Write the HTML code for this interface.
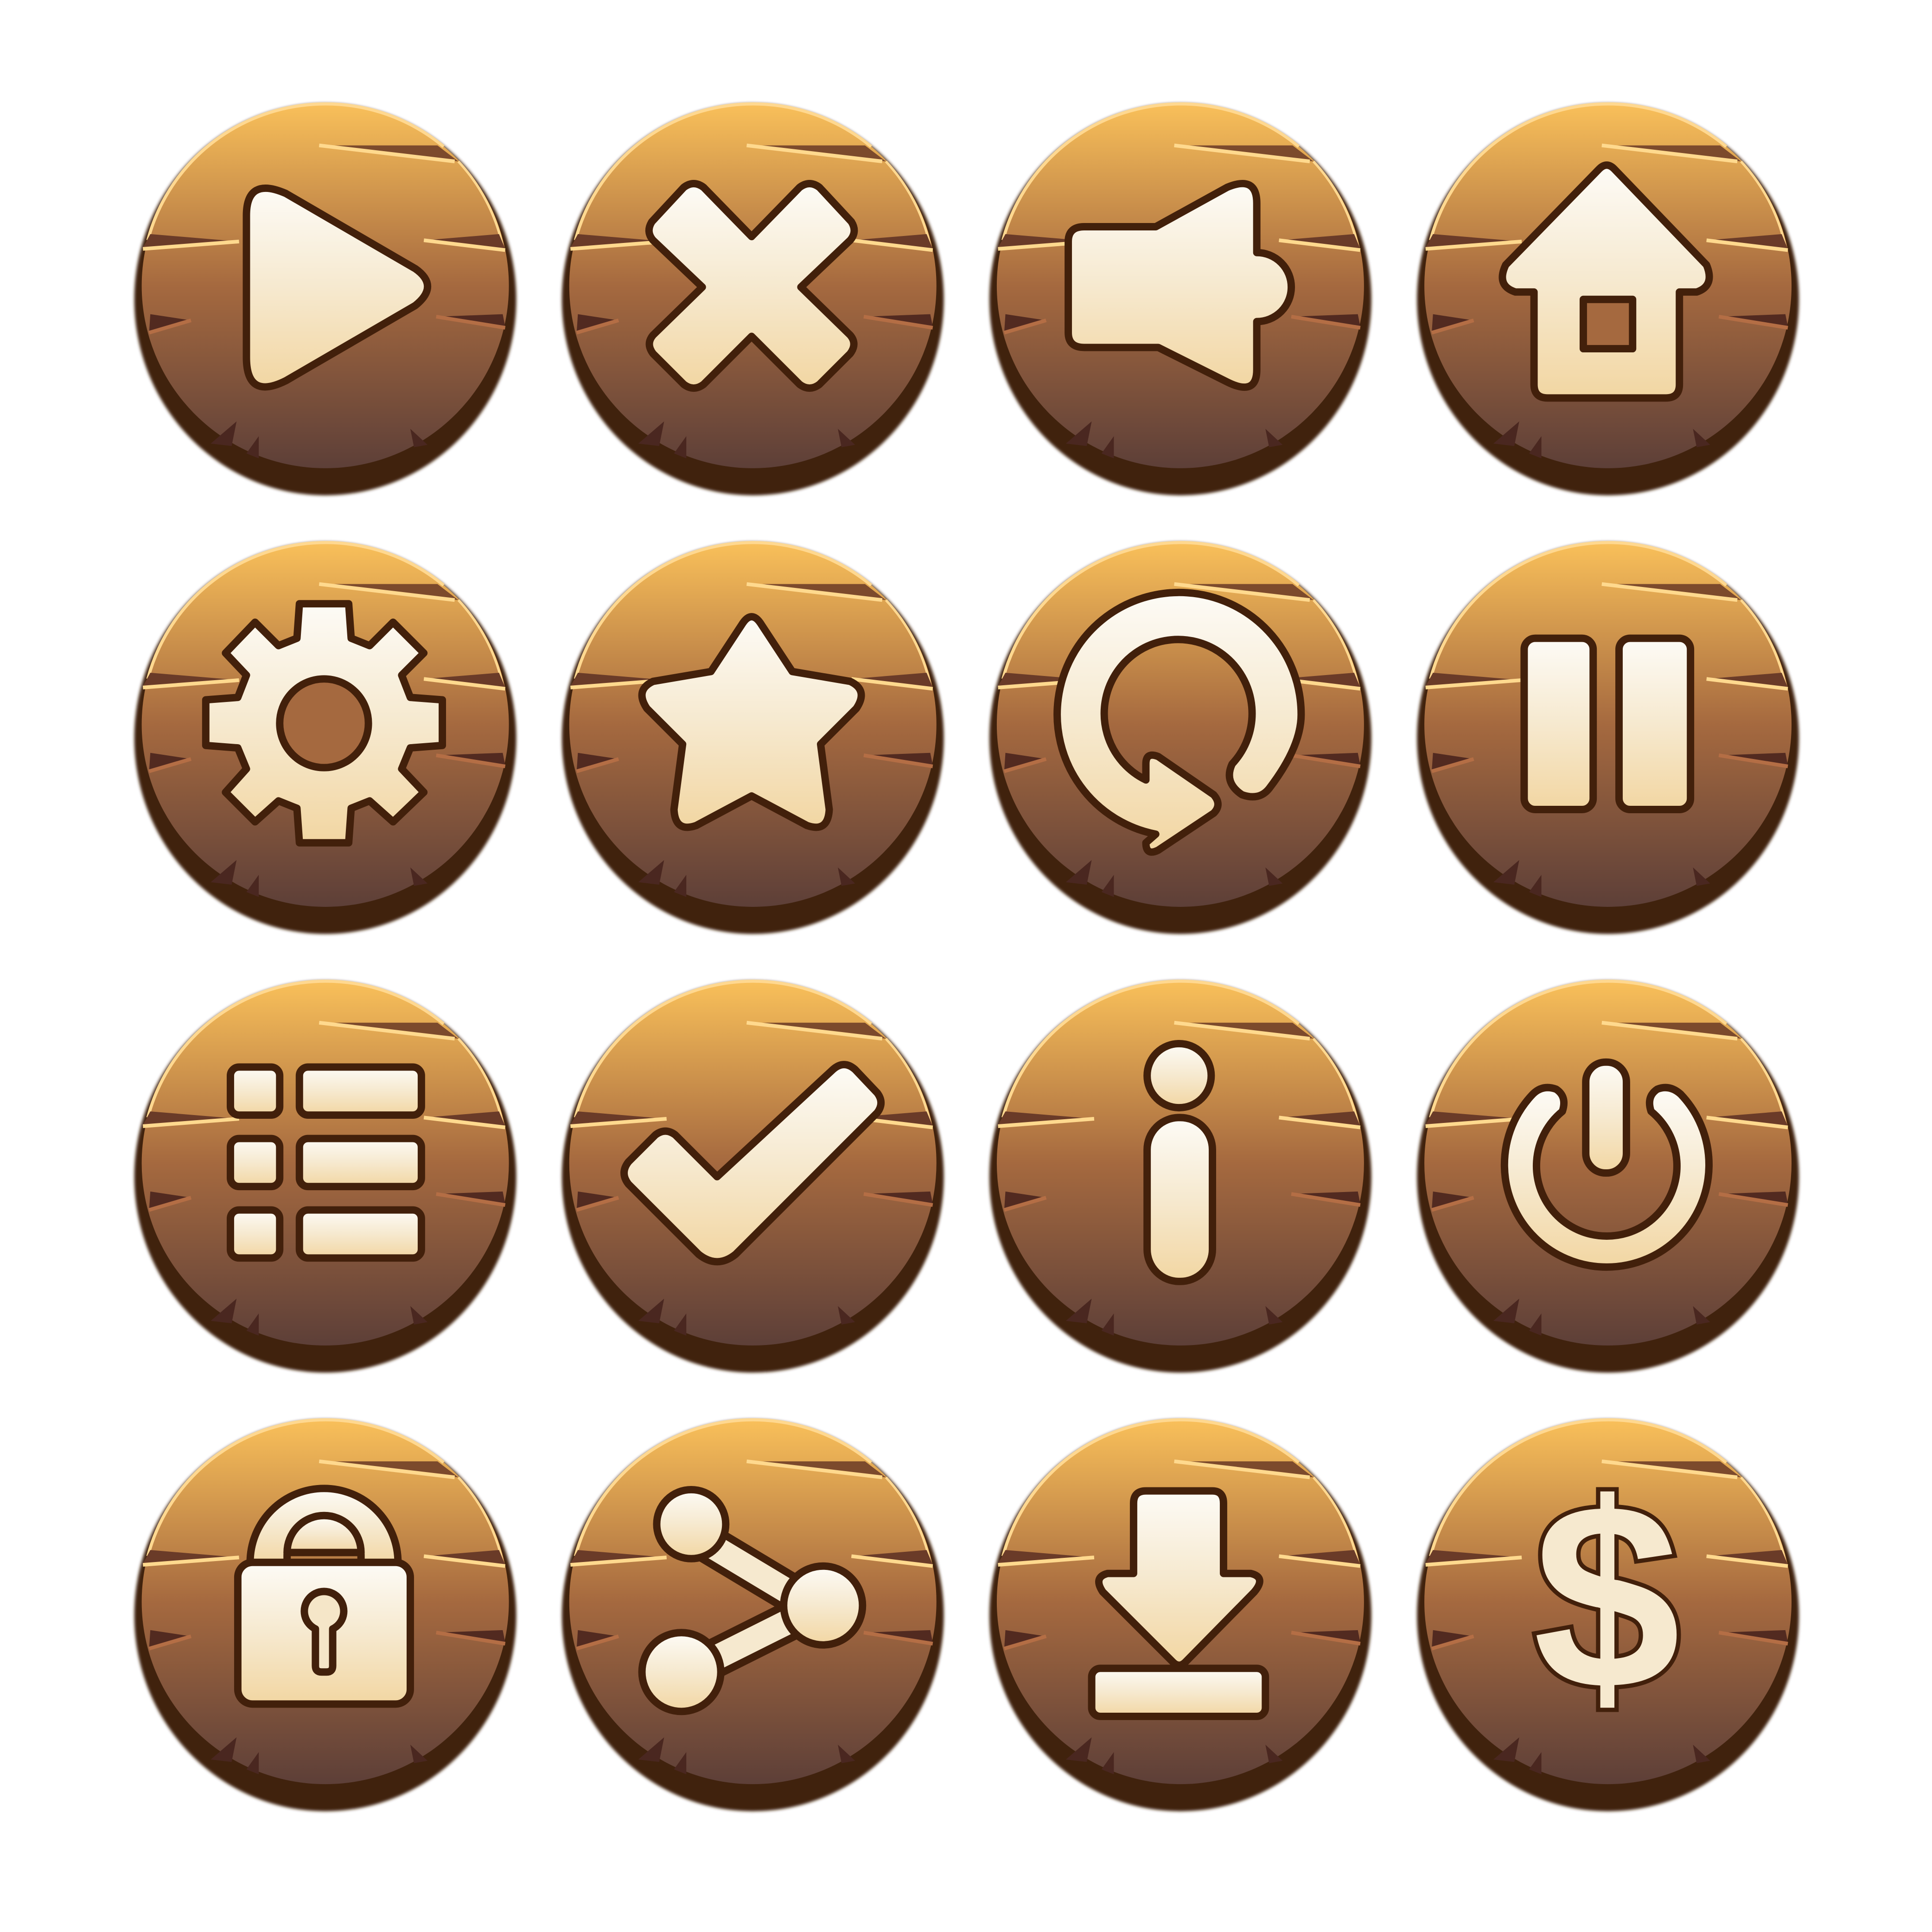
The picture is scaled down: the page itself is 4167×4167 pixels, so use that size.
<!DOCTYPE html>
<html><head><meta charset="utf-8"><style>
html,body{margin:0;padding:0;background:#fff;}
svg{display:block;width:4167px;height:4167px;}
</style></head><body>
<svg viewBox="0 0 1568 1568" xmlns="http://www.w3.org/2000/svg" xmlns:xlink="http://www.w3.org/1999/xlink">
<defs>
<filter id="bl" x="-10%" y="-10%" width="120%" height="120%"><feGaussianBlur stdDeviation="1.2"/></filter>
<linearGradient id="wood" x1="0" y1="0" x2="0" y2="1">
<stop offset="0" stop-color="#f9c05a"/><stop offset="0.5" stop-color="#a5693f"/><stop offset="1" stop-color="#5d3f38"/></linearGradient>
<linearGradient id="ic" x1="0" y1="0" x2="0" y2="1" gradientUnits="objectBoundingBox">
<stop offset="0" stop-color="#fdfbf6"/><stop offset="0.5" stop-color="#f6e9cf"/><stop offset="1" stop-color="#f2d6a2"/></linearGradient>
<g id="btn">
<ellipse cx="264" cy="243" rx="155" ry="159" fill="#3f200c" filter="url(#bl)"/>
<ellipse cx="264" cy="232" rx="149" ry="148" fill="url(#wood)"/>
<path d="M120 195 A149 148 0 0 1 360 119" fill="none" stroke="#ffd890" stroke-width="2.5"/>
<path d="M372 131 A149 148 0 0 1 408 200" fill="none" stroke="#ffd890" stroke-width="2"/>
<polygon points="259,118 355,118 372,131" fill="#7c4a2c"/>
<line x1="259" y1="118" x2="369" y2="131" stroke="#ffd98e" stroke-width="3"/>
<polygon points="122,190 194,196 116,201" fill="#6a3b28"/>
<line x1="116" y1="202" x2="194" y2="196" stroke="#ffd98e" stroke-width="3"/>
<polygon points="344,195 405,190 410,202" fill="#6a3b28"/>
<line x1="344" y1="195" x2="410" y2="203" stroke="#ffd98e" stroke-width="3"/>
<polygon points="122,255 155,260 121,270" fill="#522a20"/>
<line x1="121" y1="270" x2="155" y2="260" stroke="#b46e45" stroke-width="3"/>
<polygon points="354,257 408,255 410,265" fill="#522a20"/>
<line x1="354" y1="257" x2="410" y2="266" stroke="#b46e45" stroke-width="3"/>
<polygon points="171,360 192,342 188,362" fill="#4a2720"/>
<polygon points="200,368 210,354 210,372" fill="#4a2720"/>
<polygon points="333,348 347,361 336,363" fill="#4a2720"/>
</g>
</defs>
<g fill="none">
<use xlink:href="#btn" x="0" y="0"/><use xlink:href="#btn" x="347" y="0"/><use xlink:href="#btn" x="694" y="0"/><use xlink:href="#btn" x="1041" y="0"/>
<use xlink:href="#btn" x="0" y="356"/><use xlink:href="#btn" x="347" y="356"/><use xlink:href="#btn" x="694" y="356"/><use xlink:href="#btn" x="1041" y="356"/>
<use xlink:href="#btn" x="0" y="712"/><use xlink:href="#btn" x="347" y="712"/><use xlink:href="#btn" x="694" y="712"/><use xlink:href="#btn" x="1041" y="712"/>
<use xlink:href="#btn" x="0" y="1068"/><use xlink:href="#btn" x="347" y="1068"/><use xlink:href="#btn" x="694" y="1068"/><use xlink:href="#btn" x="1041" y="1068"/>
</g>
<g fill="url(#ic)" stroke="#42200b" stroke-width="6" stroke-linejoin="round">
<path d="M200 175 Q200 143 232 157 L337 218 Q357 232 337 248 L232 309 Q200 325 200 290 Z"/>
<path d="M529 180 L555 152 Q563 146 571 152 L610 192 L649 152 Q657 146 665 152 L691 180 Q696 188 690 195 L650 233 L690 272 Q696 279 690 287 L665 312 Q657 318 649 312 L610 273 L571 312 Q563 318 555 312 L530 287 Q524 279 530 272 L570 233 L530 195 Q524 188 529 180 Z"/>
<path d="M880 184 L938 184 L996 152 Q1020 142 1020 165 L1020 205 A28 28 0 0 1 1020 261 L1020 300 Q1020 322 996 310 L940 282 L880 282 Q867 282 867 270 L867 196 Q867 184 880 184 Z"/>
<path d="M1298 137 Q1304 131 1310 137 L1385 215 Q1392 232 1377 237 L1363 237 L1363 312 Q1363 323 1352 323 L1256 323 Q1245 323 1245 312 L1245 237 L1230 237 Q1214 232 1222 215 Z"/>
<rect x="1285" y="243" width="40" height="40" fill="#a5693f" stroke="#42200b"/>
<path d="M243 490 L283 490 L285 518 L300 524 L319 505 L344 530 L326 548 L333 566 L359 568 L359 605 L333 607 L326 624 L344 643 L319 667 L300 650 L285 656 L283 684 L243 684 L241 656 L226 650 L207 667 L183 643 L200 624 L193 607 L167 605 L167 568 L193 566 L200 548 L183 530 L207 505 L226 524 L241 518 Z"/>
<circle cx="263" cy="587" r="36" fill="#a5693f"/>
<path d="M602 507 Q610 494 618 507 L643 545 L690 553 Q705 560 695 575 L666 604 L673 657 Q672 676 655 670 L610 646 L565 670 Q548 676 547 657 L554 604 L525 575 Q515 560 530 553 L577 545 Z"/>
<path d="M1030 640 Q1056 606 1056 580 A99 99 0 1 0 938 677 L930 684 Q930 695 940 690 L985 660 Q992 653 985 645 L940 614 Q930 610 930 620 L930 633 A60 60 0 1 1 1000 620 Q993 635 1008 645 Q1022 650 1030 640 Z"/>
<rect x="1237" y="518" width="56" height="139" rx="9"/>
<rect x="1314" y="518" width="58" height="139" rx="9"/>
<rect x="187" y="866" width="40" height="39" rx="7"/><rect x="243" y="866" width="99" height="39" rx="7"/>
<rect x="187" y="924" width="40" height="39" rx="7"/><rect x="243" y="924" width="99" height="39" rx="7"/>
<rect x="187" y="982" width="40" height="39" rx="7"/><rect x="243" y="982" width="99" height="39" rx="7"/>
<path d="M510 943 L532 921 Q540 915 548 921 L582 955 L676 868 Q685 860 694 868 L712 887 Q718 895 712 903 L597 1018 Q582 1030 567 1018 L510 961 Q503 952 510 943 Z"/>
<circle cx="957" cy="873" r="26"/>
<rect x="931" y="907" width="53" height="133" rx="26"/>
<path d="M1263 884 Q1272 890 1268 902 A57 57 0 1 0 1340 902 Q1336 890 1345 884 Q1355 880 1364 888 A83 83 0 1 1 1244 888 Q1252 880 1263 884 Z"/>
<rect x="1287" y="862" width="33" height="90" rx="16"/>
<path d="M203 1268 A60 60 0 0 1 323 1268 L323 1270 L293 1270 L293 1262 A30 30 0 0 0 233 1262 L233 1270 L203 1270 Z"/>
<path d="M233 1260 A30 30 0 0 1 293 1260 Z"/>
<rect x="193" y="1268" width="140" height="115" rx="12"/>
<path d="M256 1322 A16 16 0 1 1 270 1322 L270 1352 Q270 1357 265 1357 L261 1357 Q256 1357 256 1352 Z" fill="#f5e6c8"/>
<path d="M570 1250 L640 1292 M640 1316 L572 1350" stroke="#42200b" stroke-width="32" stroke-linecap="round"/>
<path d="M570 1250 L640 1292 M640 1316 L572 1350" stroke="#f6e9cf" stroke-width="20" stroke-linecap="round"/>
<circle cx="561" cy="1237" r="28"/>
<circle cx="668" cy="1303" r="32"/>
<circle cx="553" cy="1357" r="32"/>
<path d="M930 1210 L984 1210 Q993 1210 993 1220 L993 1277 L1015 1277 Q1028 1280 1018 1292 L962 1349 Q957 1354 952 1349 L895 1292 Q887 1280 899 1277 L920 1277 L920 1220 Q920 1210 930 1210 Z"/>
<rect x="886" y="1354" width="141" height="39" rx="7"/>
</g>
<text x="1304" y="1370" text-anchor="middle" font-family="'Liberation Sans',sans-serif" font-weight="bold" font-size="215" fill="#f6e9cf" stroke="#42200b" stroke-width="7" paint-order="stroke">$</text>
</svg>
</body></html>
